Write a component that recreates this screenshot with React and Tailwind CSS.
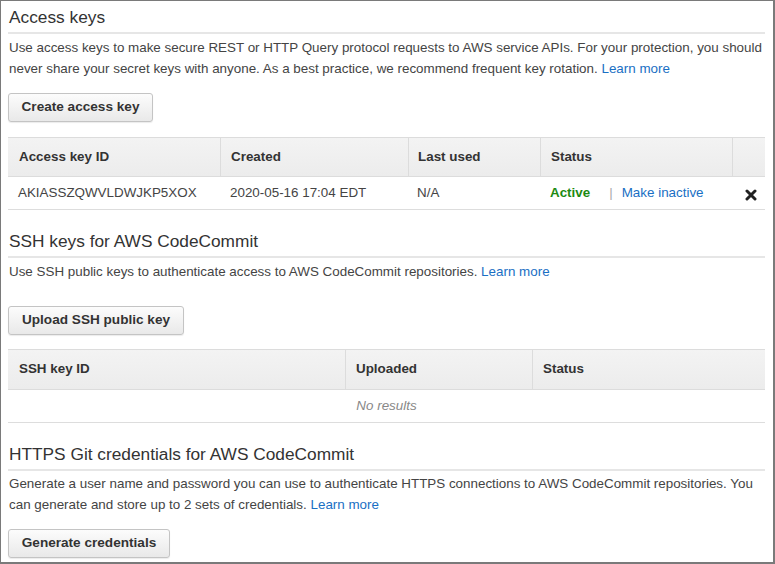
import React from 'react';

// AWS IAM "Security credentials" panel — access keys, SSH keys, HTTPS Git credentials

const font = { fontFamily: '"Liberation Sans", Arial, sans-serif' };

function Heading({ children, className = '' }) {
  return (
    <div className={`border-b-2 border-[#e6e6e6] pb-[3px] ${className}`}>
      <h2 className="pl-px text-[17.3px] leading-[24px] text-[#333]">{children}</h2>
    </div>
  );
}

function Button({ children, className = '' }) {
  return (
    <button
      className={`h-[29px] whitespace-nowrap rounded-[3px] border border-[#c4c4c4] bg-gradient-to-b from-[#fcfcfc] to-[#e9e9e9] px-[12px] text-[13.6px] font-bold text-[#333] shadow-[0_1px_1px_rgba(0,0,0,0.08)] ${className}`}
    >
      {children}
    </button>
  );
}

function Link({ children }) {
  return <a className="text-[#1a6fc4]">{children}</a>;
}

function CloseIcon() {
  return (
    <svg width="12" height="12" viewBox="0 0 12 12" className="text-[#222]">
      <path d="M2 2 L10 10 M10 2 L2 10" stroke="currentColor" strokeWidth="3" strokeLinecap="round" />
    </svg>
  );
}

export default function App() {
  return (
    <div
      style={font}
      className="h-[564px] w-[775px] overflow-hidden border border-r-2 border-b-2 border-[#7a7a7a] bg-white pl-[7px] pr-[8px] pt-[4px] text-[13.4px] text-[#444]"
    >
      {/* Access keys */}
      <Heading>Access keys</Heading>
      <p className="mt-[3px] pl-px leading-[21px]">
        Use access keys to make secure REST or HTTP Query protocol requests to AWS service APIs. For your protection, you should
        never share your secret keys with anyone. As a best practice, we recommend frequent key rotation. <Link>Learn more</Link>
      </p>
      <Button className="mt-[14px] w-[145px]">Create access key</Button>

      <div className="mt-[15px] border-b border-[#ddd]">
        <div className="flex h-[40px] border-y border-[#dcdcdc] bg-gradient-to-b from-[#f3f3f3] to-[#ececec] font-bold text-[#333]">
          <div className="flex w-[212px] items-center pl-[11px]">Access key ID</div>
          <div className="flex w-[188px] items-center border-l border-[#dcdcdc] pl-[10px]">Created</div>
          <div className="flex w-[132px] items-center border-l border-[#dcdcdc] pl-[9px]">Last used</div>
          <div className="flex w-[192px] items-center border-l border-[#dcdcdc] pl-[10px]">Status</div>
          <div className="flex-1 border-l border-[#dcdcdc]" />
        </div>
        <div className="flex h-[32px] items-center">
          <div className="w-[212px] pl-[10px]">AKIASSZQWVLDWJKP5XOX</div>
          <div className="w-[188px] pl-[10px]">2020-05-16 17:04 EDT</div>
          <div className="w-[132px] pl-[9px]">N/A</div>
          <div className="flex w-[192px] items-center pl-[10px]">
            <span className="font-bold text-[#1d8a12]">Active</span>
            <span className="ml-[19px] mr-[9px] text-[#aaa]">|</span>
            <Link>Make inactive</Link>
          </div>
          <div className="flex flex-1 justify-end pr-[8px] pt-[3px]">
            <CloseIcon />
          </div>
        </div>
      </div>

      {/* SSH keys */}
      <Heading className="mt-[19px]">SSH keys for AWS CodeCommit</Heading>
      <p className="mt-[3px] pl-px leading-[21px]">
        Use SSH public keys to authenticate access to AWS CodeCommit repositories. <Link>Learn more</Link>
      </p>
      <Button className="mt-[24px] w-[176px]">Upload SSH public key</Button>

      <div className="mt-[14px] border-b border-[#ddd]">
        <div className="flex h-[41px] border-y border-[#dcdcdc] bg-gradient-to-b from-[#f3f3f3] to-[#ececec] font-bold text-[#333]">
          <div className="flex w-[337px] items-center pl-[11px]">SSH key ID</div>
          <div className="flex w-[187px] items-center border-l border-[#dcdcdc] pl-[10px]">Uploaded</div>
          <div className="flex flex-1 items-center border-l border-[#dcdcdc] pl-[10px]">Status</div>
        </div>
        <div className="flex h-[32px] items-center justify-center italic text-[#888]">No results</div>
      </div>

      {/* HTTPS Git credentials */}
      <Heading className="mt-[19px]">HTTPS Git credentials for AWS CodeCommit</Heading>
      <p className="mt-[2px] pl-px leading-[21px]">
        Generate a user name and password you can use to authenticate HTTPS connections to AWS CodeCommit repositories. You
        can generate and store up to 2 sets of credentials. <Link>Learn more</Link>
      </p>
      <Button className="mt-[14px] w-[162px]">Generate credentials</Button>
    </div>
  );
}
